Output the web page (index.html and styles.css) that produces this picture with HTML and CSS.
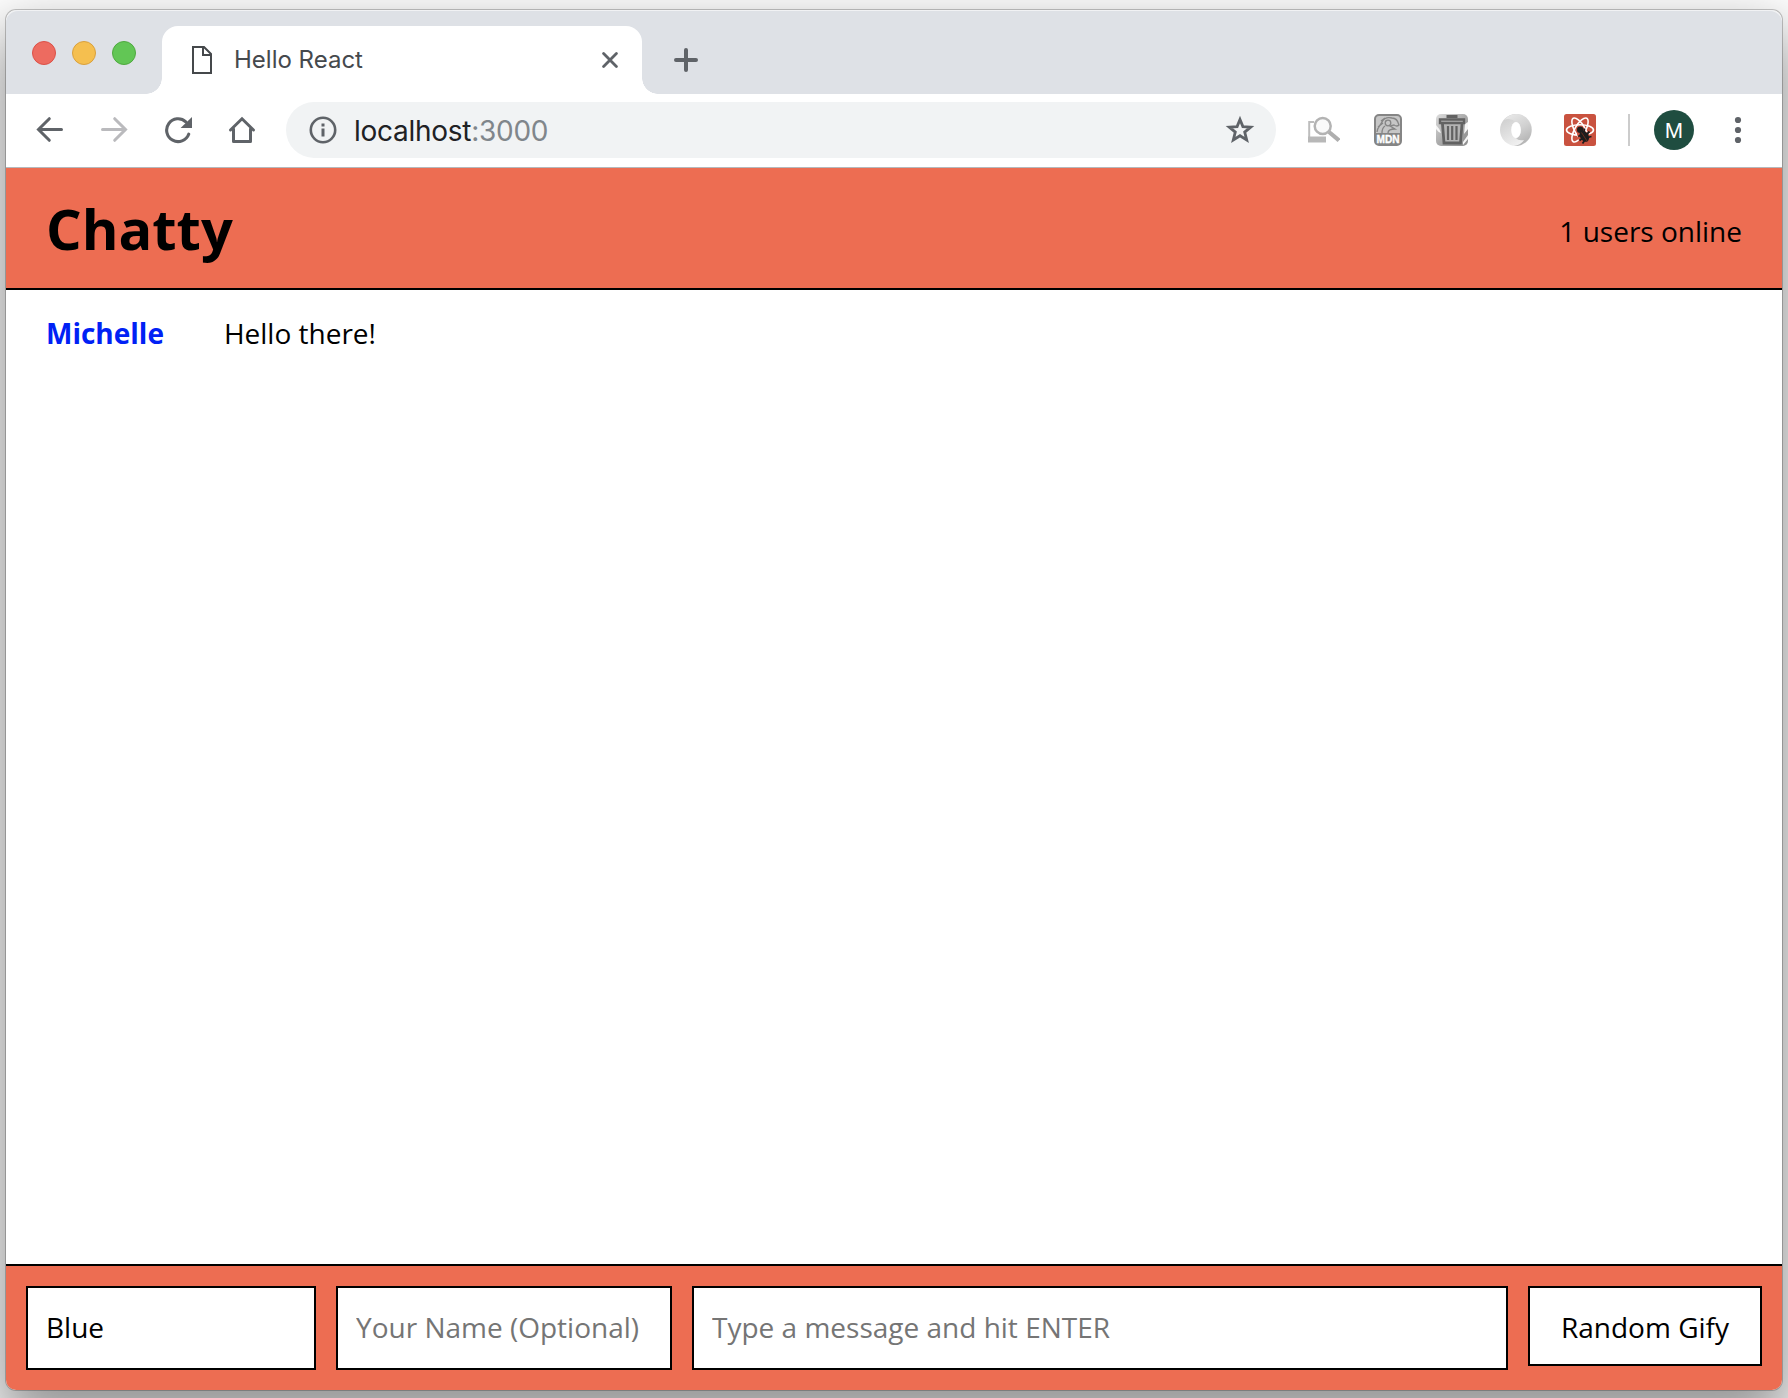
FILE: index.html
```html
<!DOCTYPE html>
<html lang="en">
<head>
<meta charset="utf-8">
<title>Hello React</title>
<link rel="stylesheet" href="styles.css">
</head>
<body>
<div class="window">
  <div class="tabstrip">
    <div class="lights"><i class="light red"></i><i class="light yellow"></i><i class="light green"></i></div>
    <div class="tab">
      <svg class="page-icon" width="20" height="28" viewBox="0 0 20 28" fill="none" stroke="#45484b" stroke-width="2"><path d="M1 1H12L19 8V27H1ZM11 1V9H19"/></svg>
      <span class="tab-title">Hello React</span>
      <svg class="tab-close" width="16" height="16" viewBox="0 0 16 16" stroke="#5f6368" stroke-width="2.8" stroke-linecap="round"><path d="M1.6 1.6L14.4 14.4M14.4 1.6L1.6 14.4"/></svg>
    </div>
    <svg class="new-tab" width="24" height="24" viewBox="0 0 24 24" stroke="#5f6368" stroke-width="4" stroke-linecap="round"><path d="M12 2V22M2 12H22"/></svg>
  </div>

  <div class="toolbar">
    <div class="cell"><svg width="28" height="28" viewBox="0 0 28 28" fill="none" stroke="#5f6368" stroke-width="3" stroke-linecap="round"><path d="M25.5 13.5H3M13.3 2.7L2.5 13.5L13.3 24.3"/></svg></div>
    <div class="cell"><svg width="28" height="28" viewBox="0 0 28 28" fill="none" stroke="#bababd" stroke-width="3" stroke-linecap="round"><path d="M2.5 13.5H25M14.7 2.7L25.5 13.5L14.7 24.3"/></svg></div>
    <div class="cell"><svg width="28" height="28" viewBox="0 0 28 28" fill="none"><path d="M24.7 18.2A11.4 11.4 0 1 1 21.8 5.8" stroke="#5f6368" stroke-width="3.1" stroke-linecap="round"/><path d="M28 1V12H16.6Z" fill="#5f6368"/></svg></div>
    <div class="cell"><svg width="28" height="28" viewBox="0 0 28 28" fill="none" stroke="#5f6368" stroke-width="3" stroke-linecap="round" stroke-linejoin="round"><path d="M5.5 13V25.5H22.5V13"/><path stroke-linejoin="miter" d="M2.5 14L14 2.8L25.5 14"/></svg></div>
    <div class="omnibox">
      <svg width="28" height="28" viewBox="0 0 28 28"><circle cx="14" cy="14" r="12.2" fill="none" stroke="#5f6368" stroke-width="2.6"/><path fill="#5f6368" d="M12.5 7.5h3v3h-3zM12.5 12.5h3v8h-3z"/></svg>
      <span class="url">localhost<span class="port">:3000</span></span>
      <svg class="star" width="30" height="30" viewBox="0 0 30 30" fill="none" stroke="#5f6368" stroke-width="2.8"><path d="M15 4.4L17.9 11.6L25.7 12.1L19.7 17.1L21.7 24.9L15 20.7L8.3 24.9L10.3 17.1L4.3 12.1L12.1 11.6Z"/></svg>
    </div>
    <div class="extensions">
      <div class="cell"><svg width="32" height="32" viewBox="0 0 32 32" fill="none"><path d="M6 8H1.2V26H18" stroke="#bdbdbd" stroke-width="2"/><path d="M0 22.5H18V28.5H0Z" fill="#b8b8b8"/><circle cx="14.7" cy="12" r="8" fill="#fafafa" stroke="#b3b3b3" stroke-width="2.5"/><path d="M21 18L31 26.5" stroke="#aeaeae" stroke-width="4.2"/></svg></div>
      <div class="cell"><svg width="28" height="32" viewBox="0 0 28 32"><rect x="1" y="1" width="26" height="30" rx="4" fill="#c6c6c6" stroke="#858585" stroke-width="2"/><path d="M1 19H27V27Q27 31 23 31H5Q1 31 1 27Z" fill="#858585"/><g fill="none" stroke="#858585" stroke-width="1.3"><path d="M3 18C3 14 6 12 8 8C10 4 14 3 18 4C22 4 24 7 25 11Q23 13 20 11L16 12L21 15Q14 15 14 19M8 19Q8 14 11 12M4 13L9 9M7 7L11 4"/><circle cx="14" cy="9" r="2.8"/></g><text class="mdn-label" x="14" y="29.2" text-anchor="middle" textLength="23" lengthAdjust="spacingAndGlyphs">MDN</text></svg></div>
      <div class="cell"><svg width="32" height="32" viewBox="0 0 32 32"><defs><linearGradient id="bin" x2="1" y2="1"><stop stop-color="#dedede"/><stop offset=".5" stop-color="#aaa"/><stop offset="1" stop-color="#8e8e8e"/></linearGradient></defs><rect width="32" height="32" rx="5" fill="url(#bin)"/><path d="M0 11Q4 15 5 19Q2 18 0 15ZM29 10L32 8V15L28 20ZM27 28L32 21V25L27 31Z" fill="#f6f6f6"/><path d="M4 7H28L26 30H7Z" fill="#b4b4b4"/><g fill="none" stroke="#626262"><path d="M10.5 2.5H21.5" stroke-width="3"/><path d="M4 9V5.5H28V9Z" stroke-width="2.4"/><path d="M6.5 10L8 29H24.5L26 10" stroke-width="2.8"/><path d="M12 12V26M16.2 12V26M20.5 12V26" stroke-width="2.2"/></g></svg></div>
      <div class="cell"><svg width="32" height="32" viewBox="0 0 32 32"><defs><linearGradient id="ringA" x1="0" y1="0" x2=".6" y2="1"><stop stop-color="#c9c9c9"/><stop offset="1" stop-color="#f2f2f2"/></linearGradient><linearGradient id="ringB" x1="0" y1="0" x2=".5" y2="1"><stop stop-color="#ececec"/><stop offset=".6" stop-color="#d0d0d0"/><stop offset="1" stop-color="#b6b6b6"/></linearGradient></defs><circle cx="16" cy="16" r="16" fill="url(#ringA)"/><path d="M4 6Q9 0 17 0A16 16 0 0 1 14 32Q21 31 24 26Q18 27 16 24Q21 22 21 16Q20 10 16 8Q10 3 4 6Z" fill="url(#ringB)"/><ellipse cx="16" cy="16" rx="4.8" ry="8" fill="#fff"/></svg></div>
      <div class="cell"><svg width="32" height="32" viewBox="0 0 32 32"><rect width="32" height="32" rx="2.5" fill="#c9523f"/><g fill="none" stroke="#fff" stroke-width="1.6"><ellipse cx="16" cy="16" rx="13.5" ry="5.2"/><ellipse cx="16" cy="16" rx="13.5" ry="5.2" transform="rotate(60 16 16)"/><ellipse cx="16" cy="16" rx="13.5" ry="5.2" transform="rotate(-60 16 16)"/></g><path d="M13 20L20 16L29 24L23 31H16Z" fill="#c9523f"/><g fill="#1d1d1d"><circle cx="16.2" cy="15.8" r="3.2"/><ellipse cx="20.3" cy="22.3" rx="4.2" ry="6" transform="rotate(-32 20.3 22.3)"/></g><path d="M14.3 22.5L18 20.5M15.5 26.5L19 24M18.5 29.5L21 26M20 18L20.5 14.5M23 20L25.5 17.5M23.5 23.5L27.5 22.5" stroke="#1d1d1d" stroke-width="1.8"/><path d="M17.5 18.5L23 27" stroke="#74301f" stroke-width=".9"/></svg></div>
    </div>
    <i class="divider"></i>
    <div class="avatar">M</div>
    <div class="cell menu"><svg width="8" height="28" viewBox="0 0 8 28" fill="#5f6368"><circle cx="4" cy="4" r="3.1"/><circle cx="4" cy="14" r="3.1"/><circle cx="4" cy="24" r="3.1"/></svg></div>
  </div>

  <header class="navbar">
    <h1 class="brand">Chatty</h1>
    <span class="online">1 users online</span>
  </header>
  <main class="messages">
    <div class="message"><span class="username">Michelle</span><span class="content">Hello there!</span></div>
  </main>
  <footer class="chatbar">
    <div class="color-select">Blue</div>
    <input class="name-input" placeholder="Your Name (Optional)">
    <input class="message-input" placeholder="Type a message and hit ENTER">
    <button class="gify">Random Gify</button>
  </footer>
</div>
</body>
</html>
```
FILE: styles.css
```css
* { box-sizing: border-box; }

body {
  margin: 0;
  height: 1398px;
  overflow: hidden;
  padding: 10px 6px 8px;
  background: #fff;
  font-family: "Open Sans", sans-serif;
  font-size: 28px;
  color: #000;
}

.window {
  display: flex;
  flex-direction: column;
  height: 1380px;
  border-radius: 10px;
  background: #fff;
  box-shadow: 0 0 0 1px rgba(0, 0, 0, .22), 0 28px 60px 8px rgba(0, 0, 0, .42);
}

.tabstrip {
  display: flex;
  height: 84px;
  flex: none;
  background: #dee1e6;
  border-radius: 12px 12px 0 0;
  box-shadow: inset 0 1px #f1f2f4;
}

.lights { display: flex; gap: 16px; width: 156px; padding: 31px 0 0 26px; }
.light { width: 24px; height: 24px; border-radius: 50%; border: 1px solid; }
.red { background: #ed6b60; border-color: #dc5047; }
.yellow { background: #f5bf4f; border-color: #d9a03d; }
.green { background: #62c655; border-color: #4fa93f; }

.tab {
  position: relative;
  display: flex;
  align-items: center;
  width: 480px;
  height: 68px;
  margin-top: 16px;
  padding: 0 24px 0 30px;
  background: #fff;
  border-radius: 16px 16px 0 0;
}
.tab::before, .tab::after {
  content: "";
  position: absolute;
  bottom: 0;
  width: 16px;
  height: 16px;
}
.tab::before { left: -16px; background: radial-gradient(circle at 0 0, transparent 15.5px, #fff 16px); }
.tab::after { right: -16px; background: radial-gradient(circle at 100% 0, transparent 15.5px, #fff 16px); }

.tab-title {
  flex: 1;
  margin-left: 22px;
  font: 24px/28px Inter, sans-serif;
  color: #45494d;
}
.new-tab { margin: 38px 0 0 32px; }

.toolbar {
  display: flex;
  align-items: center;
  flex: none;
  height: 74px;
  padding: 0 12px 1px;
  border-bottom: 1px solid #b5b8bc;
}
.cell { display: flex; align-items: center; justify-content: center; width: 64px; height: 56px; flex: none; }

.omnibox {
  display: flex;
  align-items: center;
  flex: 1;
  height: 56px;
  margin: 0 16px 0 12px;
  padding: 0 21px 0 22.5px;
  border-radius: 28px;
  background: #f1f3f4;
}
.url {
  flex: 1;
  margin-left: 17.5px;
  padding-top: 1px;
  font: 28px/34px Inter, sans-serif;
  letter-spacing: -.27px;
  color: #202124;
}
.port { color: #80868b; }

.extensions { display: flex; }
.mdn-label { font: 700 10.5px "Liberation Sans", sans-serif; fill: #fff; stroke: #fff; stroke-width: .4px; }
.divider { width: 2px; height: 32px; margin: 0 24px 0 16px; background: #ccc; }
.avatar {
  width: 40px;
  height: 40px;
  border-radius: 50%;
  background: #1f4d40;
  color: #fff;
  font: 22px/41px "Liberation Sans", sans-serif;
  text-align: center;
}
.menu { margin-left: 12px; }

.navbar {
  display: flex;
  align-items: center;
  justify-content: space-between;
  flex: none;
  height: 122px;
  padding: 0 40px;
  background: #ed6d52;
  border-bottom: 2px solid #000;
}
.brand { margin: 0; font-size: 56px; line-height: 76px; }
.online { line-height: 38px; padding-top: 6px; }

.messages { flex: 1; padding: 24px 40px; }
.message { display: flex; gap: 60px; line-height: 38px; }
.username { font-weight: 700; color: #0021f5; }

.chatbar {
  display: flex;
  align-items: flex-start;
  gap: 20px;
  flex: none;
  height: 126px;
  padding: 20px;
  background: #ed6d52;
  border-top: 2px solid #000;
  border-radius: 0 0 10px 10px;
}
.color-select, .name-input, .message-input, .gify {
  height: 84px;
  margin: 0;
  padding: 0 18px 2px;
  border: 2px solid #000;
  border-radius: 0;
  background: #fff;
  color: #000;
  font: 28px/78px "Open Sans", sans-serif;
}
.color-select { width: 290px; }
.name-input { width: 336px; }
.message-input { flex: 1; min-width: 0; }
.name-input::placeholder, .message-input::placeholder { color: #757575; opacity: 1; }
.gify { width: 234px; height: 80px; line-height: 74px; padding: 2px 0 0; }
```
